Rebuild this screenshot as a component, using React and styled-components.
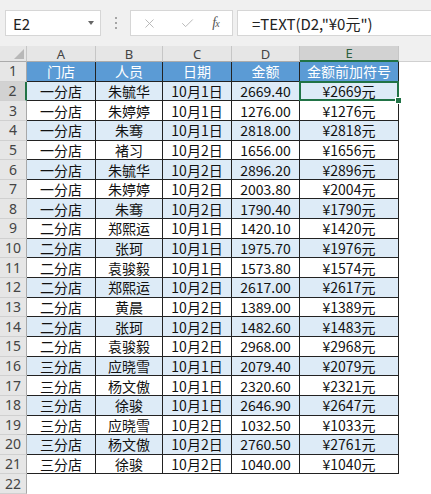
import React from 'react';
import styled, { createGlobalStyle } from 'styled-components';
import { X, Check } from 'lucide-react';

const Global = createGlobalStyle`
  html, body { margin: 0; padding: 0; background: #fff; }
  body { font-family: "Noto Sans CJK SC", "Noto Sans", sans-serif; overflow: hidden; }
`;

const Page = styled.div`
  width: 431px;
  height: 494px;
  overflow: hidden;
  display: flex;
  flex-direction: column;
`;

const Toolbar = styled.div`
  height: 46px;
  flex: none;
  box-sizing: border-box;
  background: #f0f0f0;
  padding: 10px 0 10px 5px;
  display: flex;
  align-items: stretch;
`;

const NameBox = styled.div`
  width: 96px;
  box-sizing: border-box;
  background: #fff;
  border: 1px solid #d6d6d6;
  display: flex;
  align-items: center;
  justify-content: space-between;
  padding: 0 6px 0 7px;
  font-size: 15px;
  color: #222;
`;

const Caret = styled.span`
  width: 0;
  height: 0;
  border-left: 3.5px solid transparent;
  border-right: 3.5px solid transparent;
  border-top: 4px solid #666;
`;

const Dots = styled.div`
  width: 29px;
  display: flex;
  flex-direction: column;
  align-items: center;
  justify-content: center;
  gap: 3px;
`;

const Dot = styled.span`
  width: 2px;
  height: 2px;
  background: #a5a5a5;
`;

const FuncBox = styled.div`
  width: 103px;
  box-sizing: border-box;
  background: #fff;
  border: 1px solid #d6d6d6;
  display: grid;
  grid-template-columns: 36px 40px 1fr;
  align-items: center;
  justify-items: center;
  color: #b0b0b0;
`;

const Fx = styled.span`
  font-family: "Liberation Serif", "DejaVu Serif", serif;
  font-style: italic;
  font-size: 14px;
  color: #555;
  margin-right: 8px;
  letter-spacing: -1px;
  small { font-size: 10px; }
`;

const FormulaBox = styled.div`
  flex: 1;
  margin-left: 4px;
  box-sizing: border-box;
  background: #fff;
  border: 1px solid #d6d6d6;
  border-right: none;
  display: flex;
  align-items: center;
  padding-left: 14px;
  font-size: 15px;
  color: #222;
  white-space: nowrap;
`;

const Sheet = styled.div`
  display: grid;
  grid-template-columns: 27px 69px 67px 69px 68px 99px 1fr;
  grid-template-rows: 16px repeat(22, 19.65px);
`;

const Corner = styled.div`
  position: relative;
  background: #e6e6e6;
  box-sizing: border-box;
  border-right: 1px solid #c6c6c6;
  border-bottom: 1px solid #ababab;
  &::after {
    content: "";
    position: absolute;
    right: 2px;
    bottom: 2px;
    width: 0;
    height: 0;
    border-left: 10px solid transparent;
    border-bottom: 10px solid #b8b8b8;
  }
`;

const ColHead = styled.div`
  box-sizing: border-box;
  background: ${p => (p.$active ? '#d2d2d2' : '#e6e6e6')};
  border-right: 1px solid #c6c6c6;
  border-bottom: ${p => (p.$active ? '2px solid #217346' : '1px solid #ababab')};
  color: ${p => (p.$active ? '#2c5f3f' : '#444')};
  font-family: "Noto Sans", "Noto Sans CJK SC", sans-serif;
  font-size: 13px;
  display: flex;
  align-items: center;
  justify-content: center;
  line-height: 1;
  padding-top: 1px;
`;

const HeadFill = styled.div`
  background: #f0f0f0;
  border-bottom: 1px solid #d0d0d0;
`;

const RowHead = styled.div`
  box-sizing: border-box;
  background: ${p => (p.$active ? '#d2d2d2' : '#e6e6e6')};
  border-right: ${p => (p.$active ? '2px solid #217346' : '1px solid #a8a8a8')};
  border-bottom: 1px solid #d0d0d0;
  color: #444;
  font-family: "Noto Sans", "Noto Sans CJK SC", sans-serif;
  font-size: 14px;
  display: flex;
  align-items: center;
  justify-content: center;
  line-height: 1;
`;

const Cell = styled.div`
  position: relative;
  box-sizing: border-box;
  background: ${p => (p.$head ? '#5b9bd5' : p.$band ? '#ddebf7' : '#fff')};
  color: ${p => (p.$head ? '#fff' : '#111')};
  border-right: 1px solid #222;
  border-bottom: 1px solid #222;
  font-size: 14px;
  display: flex;
  align-items: center;
  justify-content: center;
  white-space: nowrap;
  line-height: 1;
  ${p =>
    p.$selected &&
    `
    z-index: 2;
    &::before {
      content: "";
      position: absolute;
      left: -1px; top: -1px; right: -1px; bottom: -1px;
      border: 2px solid #217346;
    }
    &::after {
      content: "";
      position: absolute;
      right: -4px; bottom: -4px;
      width: 5px; height: 5px;
      background: #217346;
      border: 1px solid #fff;
    }
  `}
`;

const Empty = styled.div`
  background: #fff;
`;

const cols = ['A', 'B', 'C', 'D', 'E'];
const header = ['门店', '人员', '日期', '金额', '金额前加符号'];
const data = [
  ['一分店', '朱毓华', '10月1日', '2669.40', '¥2669元'],
  ['一分店', '朱婷婷', '10月1日', '1276.00', '¥1276元'],
  ['一分店', '朱骞', '10月1日', '2818.00', '¥2818元'],
  ['一分店', '褚习', '10月2日', '1656.00', '¥1656元'],
  ['一分店', '朱毓华', '10月2日', '2896.20', '¥2896元'],
  ['一分店', '朱婷婷', '10月2日', '2003.80', '¥2004元'],
  ['一分店', '朱骞', '10月2日', '1790.40', '¥1790元'],
  ['二分店', '郑熙运', '10月1日', '1420.10', '¥1420元'],
  ['二分店', '张珂', '10月1日', '1975.70', '¥1976元'],
  ['二分店', '袁骏毅', '10月1日', '1573.80', '¥1574元'],
  ['二分店', '郑熙运', '10月2日', '2617.00', '¥2617元'],
  ['二分店', '黄晨', '10月2日', '1389.00', '¥1389元'],
  ['二分店', '张珂', '10月2日', '1482.60', '¥1483元'],
  ['二分店', '袁骏毅', '10月2日', '2968.00', '¥2968元'],
  ['三分店', '应晓雪', '10月1日', '2079.40', '¥2079元'],
  ['三分店', '杨文傲', '10月1日', '2320.60', '¥2321元'],
  ['三分店', '徐骏', '10月1日', '2646.90', '¥2647元'],
  ['三分店', '应晓雪', '10月2日', '1032.50', '¥1033元'],
  ['三分店', '杨文傲', '10月2日', '2760.50', '¥2761元'],
  ['三分店', '徐骏', '10月2日', '1040.00', '¥1040元'],
];

export default function App() {
  return (
    <Page>
      <Global />
      <Toolbar>
        <NameBox>
          <span>E2</span>
          <Caret />
        </NameBox>
        <Dots>
          <Dot />
          <Dot />
          <Dot />
        </Dots>
        <FuncBox>
          <X size={15} strokeWidth={1.4} />
          <Check size={15} strokeWidth={1.4} />
          <Fx>
            f<small>x</small>
          </Fx>
        </FuncBox>
        <FormulaBox>=TEXT(D2,"¥0元")</FormulaBox>
      </Toolbar>
      <Sheet>
        <Corner />
        {cols.map(c => (
          <ColHead key={c} $active={c === 'E'}>
            {c}
          </ColHead>
        ))}
        <HeadFill />

        <RowHead>1</RowHead>
        {header.map(h => (
          <Cell key={h} $head>
            {h}
          </Cell>
        ))}
        <Empty />

        {data.map((row, i) => {
          const r = i + 2;
          return (
            <React.Fragment key={r}>
              <RowHead $active={r === 2}>{r}</RowHead>
              {row.map((v, j) => (
                <Cell key={j} $band={r % 2 === 0} $selected={r === 2 && j === 4}>
                  {v}
                </Cell>
              ))}
              <Empty />
            </React.Fragment>
          );
        })}

        <RowHead>22</RowHead>
        <Empty />
        <Empty />
        <Empty />
        <Empty />
        <Empty />
        <Empty />
      </Sheet>
    </Page>
  );
}
